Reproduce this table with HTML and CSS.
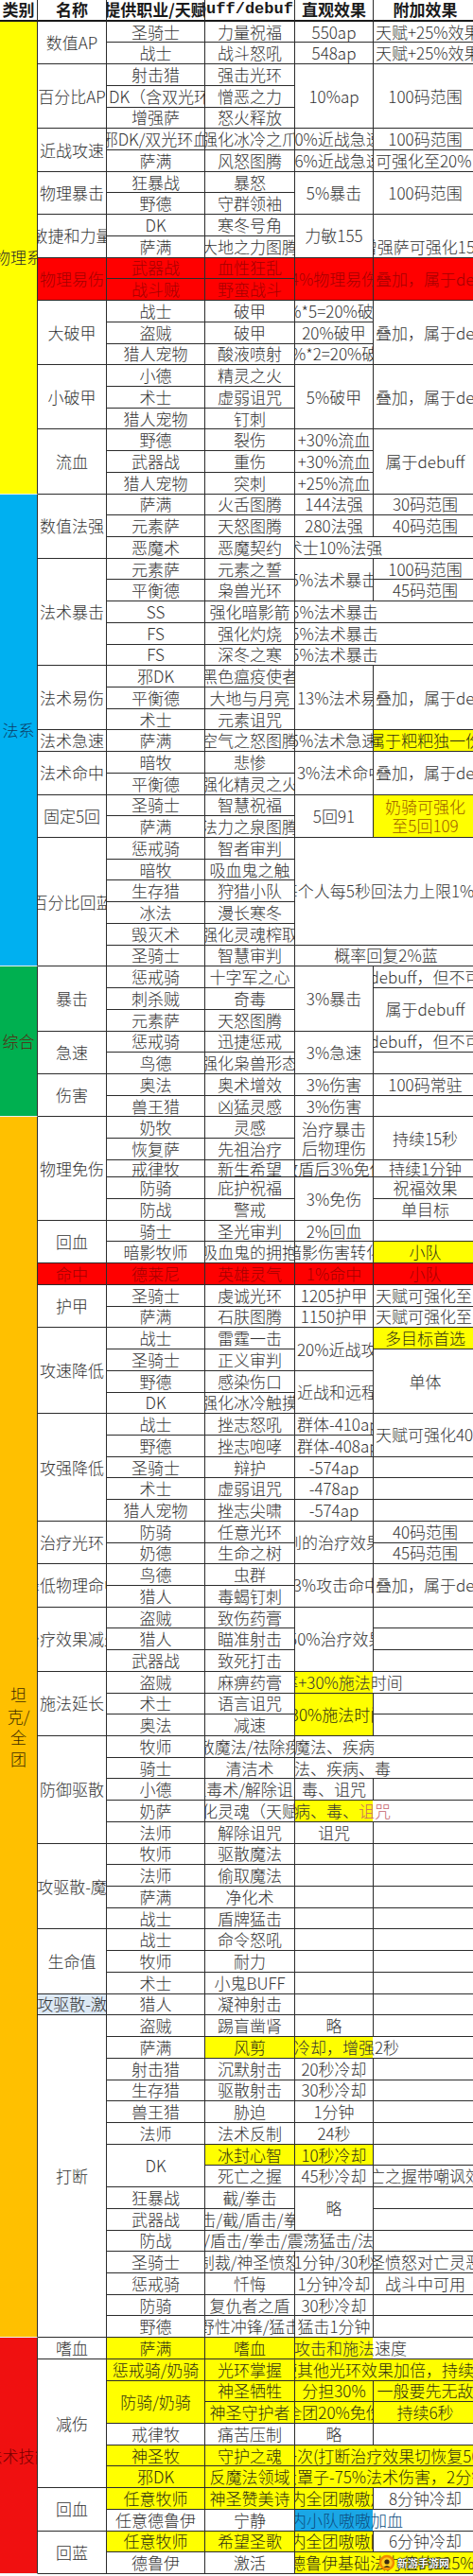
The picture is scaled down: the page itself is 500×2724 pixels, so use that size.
FILE: index.html
```html
<!DOCTYPE html>
<html lang="zh-CN">
<head>
<meta charset="utf-8">
<title>团队buff/debuff一览</title>
<link rel="stylesheet" href="styles.css">
</head>
<body>
<div class="wrap">
<div class="sheet">
<div class="h">类别</div><div class="h">名称</div><div class="h">提供职业/天赋</div><div class="h mono">buff/debuff</div><div class="h">直观效果</div><div class="h">附加效果</div>

<div class="cat k-y r22">物理系</div>
<div class="r2">数值AP</div><div>圣骑士</div><div>力量祝福</div><div>550ap</div><div class="l">天赋+25%效果</div>
<div>战士</div><div>战斗怒吼</div><div>548ap</div><div class="l">天赋+25%效果</div>
<div class="r3">百分比AP</div><div>射击猎</div><div>强击光环</div><div class="r3">10%ap</div><div class="r3">100码范围</div>
<div class="l">DK（含双光环）</div><div>憎恶之力</div>
<div>增强萨</div><div>怒火释放</div>
<div class="r2">近战攻速</div><div>邪DK/双光环血</div><div>强化冰冷之爪</div><div>20%近战急速</div><div>100码范围</div>
<div>萨满</div><div>风怒图腾</div><div>16%近战急速</div><div class="l">可强化至20%，持续</div>
<div class="r2">物理暴击</div><div>狂暴战</div><div>暴怒</div><div class="r2">5%暴击</div><div class="r2">100码范围</div>
<div>野德</div><div>守群领袖</div>
<div class="r2">敏捷和力量</div><div>DK</div><div>寒冬号角</div><div class="r2">力敏155</div><div class="r2 bt">增强萨可强化15%</div>
<div>萨满</div><div>大地之力图腾</div>
<div class="r2 rd">物理易伤</div><div class="rd">武器战</div><div class="rd">血性狂乱</div><div class="r2 rd">4%物理易伤</div><div class="r2 rd l">叠加，属于debuff</div>
<div class="rd">战斗贼</div><div class="rd">野蛮战斗</div>
<div class="r3">大破甲</div><div>战士</div><div>破甲</div><div>4%*5=20%破甲</div><div class="r3 l">叠加，属于debuff</div>
<div>盗贼</div><div>破甲</div><div>20%破甲</div>
<div>猎人宠物</div><div>酸液喷射</div><div>10%*2=20%破甲</div>
<div class="r3">小破甲</div><div>小德</div><div>精灵之火</div><div class="r3">5%破甲</div><div class="r3 l">叠加，属于debuff</div>
<div>术士</div><div>虚弱诅咒</div>
<div>猎人宠物</div><div>钉刺</div>
<div class="r3">流血</div><div>野德</div><div>裂伤</div><div>+30%流血</div><div class="r3">属于debuff</div>
<div>武器战</div><div>重伤</div><div>+30%流血</div>
<div>猎人宠物</div><div>突刺</div><div>+25%流血</div>

<div class="cat k-b r22">法系</div>
<div class="r3">数值法强</div><div>萨满</div><div>火舌图腾</div><div>144法强</div><div>30码范围</div>
<div>元素萨</div><div>天怒图腾</div><div>280法强</div><div>40码范围</div>
<div>恶魔术</div><div>恶魔契约</div><div class="c2 sp"><i>术士10%法强</i></div>
<div class="r5">法术暴击</div><div>元素萨</div><div>元素之誓</div><div class="r2">5%法术暴击</div><div>100码范围</div>
<div>平衡德</div><div>枭兽光环</div><div>45码范围</div>
<div>SS</div><div>强化暗影箭</div><div class="c2 sp"><i>5%法术暴击</i></div>
<div>FS</div><div>强化灼烧</div><div class="c2 sp"><i>5%法术暴击</i></div>
<div>FS</div><div>深冬之寒</div><div class="c2 sp"><i>5%法术暴击</i></div>
<div class="r3">法术易伤</div><div>邪DK</div><div>黑色瘟疫使者</div><div class="r3 l">13%法术易伤</div><div class="r3 l">叠加，属于debuff</div>
<div>平衡德</div><div>大地与月亮</div>
<div>术士</div><div>元素诅咒</div>
<div>法术急速</div><div>萨满</div><div>空气之怒图腾</div><div>5%法术急速</div><div class="y">属于粑粑独一份</div>
<div class="r2">法术命中</div><div>暗牧</div><div>悲惨</div><div class="r2 l">3%法术命中</div><div class="r2 l">叠加，属于debuff</div>
<div>平衡德</div><div>强化精灵之火</div>
<div class="r2">固定5回</div><div>圣骑士</div><div>智慧祝福</div><div class="r2">5回91</div><div class="r2 y ml nq">奶骑可强化<br>至5回109</div>
<div>萨满</div><div>法力之泉图腾</div>
<div class="r6">百分比回蓝</div><div>惩戒骑</div><div>智者审判</div><div class="r5 c2">每个人每5秒回法力上限1%，</div>
<div>暗牧</div><div>吸血鬼之触</div>
<div>生存猎</div><div>狩猎小队</div>
<div>冰法</div><div>漫长寒冬</div>
<div>毁灭术</div><div>强化灵魂榨取</div>
<div>圣骑士</div><div>智慧审判</div><div class="c2">概率回复2%蓝</div>

<div class="cat k-g r7">综合</div>
<div class="r3">暴击</div><div>惩戒骑</div><div>十字军之心</div><div class="r3">3%暴击</div><div>属于debuff，但不可叠加</div>
<div>刺杀贼</div><div>奇毒</div><div class="r2">属于debuff</div>
<div>元素萨</div><div>天怒图腾</div>
<div class="r2">急速</div><div>惩戒骑</div><div>迅捷惩戒</div><div class="r2">3%急速</div><div>属于debuff，但不可叠加</div>
<div>鸟德</div><div>强化枭兽形态</div><div></div>
<div class="r2">伤害</div><div>奥法</div><div>奥术增效</div><div>3%伤害</div><div>100码常驻</div>
<div>兽王猎</div><div>凶猛灵感</div><div>3%伤害</div><div></div>

<div class="cat k-o r57 vt">坦<br>克/<br>全<br>团</div>
<div class="r5">物理免伤</div><div>奶牧</div><div>灵感</div><div class="r2 nq">治疗暴击<br>后物理伤</div><div class="r2">持续15秒</div>
<div>恢复萨</div><div>先祖治疗</div>
<div>戒律牧</div><div>新生希望</div><div>放盾后3%免伤</div><div>持续1分钟</div>
<div>防骑</div><div>庇护祝福</div><div class="r2">3%免伤</div><div>祝福效果</div>
<div>防战</div><div>警戒</div><div>单目标</div>
<div class="r2">回血</div><div>骑士</div><div>圣光审判</div><div>2%回血</div><div></div>
<div>暗影牧师</div><div>吸血鬼的拥抱</div><div>暗影伤害转化</div><div class="y">小队</div>
<div class="rd">命中</div><div class="rd">德莱尼</div><div class="rd">英雄灵气</div><div class="rd">1%命中</div><div class="rd">小队</div>
<div class="r2">护甲</div><div>圣骑士</div><div>虔诚光环</div><div>1205护甲</div><div class="l">天赋可强化至1500</div>
<div>萨满</div><div>石肤图腾</div><div>1150护甲</div><div class="l">天赋可强化至1400</div>
<div class="r4">攻速降低</div><div>战士</div><div>雷霆一击</div><div class="r2 l">20%近战攻速</div><div class="y">多目标首选</div>
<div>圣骑士</div><div>正义审判</div><div class="r3">单体</div>
<div>野德</div><div>感染伤口</div><div class="r2 l">近战和远程</div>
<div>DK</div><div>强化冰冷触摸</div>
<div class="r5">攻强降低</div><div>战士</div><div>挫志怒吼</div><div class="l">群体-410ap</div><div class="r2 l">天赋可强化40%</div>
<div>野德</div><div>挫志咆哮</div><div class="l">群体-408ap</div>
<div>圣骑士</div><div>辩护</div><div>-574ap</div><div></div>
<div>术士</div><div>虚弱诅咒</div><div>-478ap</div><div></div>
<div>猎人宠物</div><div>挫志尖啸</div><div>-574ap</div><div></div>
<div class="r2">治疗光环</div><div>防骑</div><div>任意光环</div><div class="r2">到的治疗效果</div><div>40码范围</div>
<div>奶德</div><div>生命之树</div><div>45码范围</div>
<div class="r2">降低物理命中</div><div>鸟德</div><div>虫群</div><div class="r2">-3%攻击命中</div><div class="r2 l">叠加，属于debuff</div>
<div>猎人</div><div>毒蝎钉刺</div>
<div class="r3">治疗效果减少</div><div>盗贼</div><div>致伤药膏</div><div class="r3">-50%治疗效果</div><div></div>
<div>猎人</div><div>瞄准射击</div><div></div>
<div>武器战</div><div>致死打击</div><div></div>
<div class="r3">施法延长</div><div>盗贼</div><div>麻痹药膏</div><div class="c2 sp yh"><i>几率+30%施法时间</i></div>
<div>术士</div><div>语言诅咒</div><div class="r2 y">+30%施法时间</div><div></div>
<div>奥法</div><div>减速</div><div></div>
<div class="r5">防御驱散</div><div>牧师</div><div>驱散魔法/祛除疾病</div><div class="c2 sp"><i>魔法、疾病</i></div>
<div>骑士</div><div>清洁术</div><div class="c2 sp"><i>魔法、疾病、毒</i></div>
<div>小德</div><div>驱毒术/解除诅咒</div><div>毒、诅咒</div><div></div>
<div>奶萨</div><div>净化灵魂（天赋）</div><div class="c2 sp yh"><i>疾病、毒、<b>诅咒</b></i></div>
<div>法师</div><div>解除诅咒</div><div>诅咒</div><div></div>
<div class="r4">进攻驱散-魔法</div><div>牧师</div><div>驱散魔法</div><div></div><div></div>
<div>法师</div><div>偷取魔法</div><div></div><div></div>
<div>萨满</div><div>净化术</div><div></div><div></div>
<div>战士</div><div>盾牌猛击</div><div></div><div></div>
<div class="r3">生命值</div><div>战士</div><div>命令怒吼</div><div></div><div></div>
<div>牧师</div><div>耐力</div><div></div><div></div>
<div>术士</div><div>小鬼BUFF</div><div></div><div></div>
<div class="pb">进攻驱散-激怒</div><div>猎人</div><div>凝神射击</div><div></div><div></div>
<div class="r15">打断</div><div>盗贼</div><div>踢盲凿肾</div><div>略</div><div></div>
<div>萨满</div><div class="y">风剪</div><div class="c2 sp yh"><i>6秒冷却，增强2秒</i></div>
<div>射击猎</div><div>沉默射击</div><div>20秒冷却</div><div></div>
<div>生存猎</div><div>驱散射击</div><div>30秒冷却</div><div></div>
<div>兽王猎</div><div>胁迫</div><div>1分钟</div><div></div>
<div>法师</div><div>法术反制</div><div>24秒</div><div></div>
<div class="r2">DK</div><div class="y">冰封心智</div><div class="y">10秒冷却</div><div></div>
<div>死亡之握</div><div>45秒冷却</div><div>死亡之握带嘲讽效果</div>
<div>狂暴战</div><div>截/拳击</div><div class="r2">略</div><div></div>
<div>武器战</div><div>拳击/截/盾击/拳击</div><div></div>
<div>防战</div><div class="c2 sp4"><i>拳击/截/盾牌猛击/盾击/拳击/震荡猛击/法术反射</i></div><div></div>
<div>圣骑士</div><div>制裁/神圣愤怒</div><div>1分钟/30秒</div><div>神圣愤怒对亡灵恶魔</div>
<div>惩戒骑</div><div>忏悔</div><div>1分钟冷却</div><div>战斗中可用</div>
<div>防骑</div><div>复仇者之盾</div><div>30秒冷却</div><div></div>
<div>野德</div><div>野性冲锋/猛击</div><div>猛击1分钟</div><div></div>

<div class="cat k-r r11">法术技能</div>
<div>嗜血</div><div class="y">萨满</div><div class="y">嗜血</div><div class="c2 sp yh"><i>提高攻击和施法速度</i></div>
<div class="r6">减伤</div><div class="y">惩戒骑/奶骑</div><div class="y">光环掌握</div><div class="c2 y l ni"><i>使其他光环效果加倍，持续6秒</i></div>
<div class="r2 y">防骑/奶骑</div><div class="y">神圣牺牲</div><div class="y">分担30%</div><div class="y">一般要先无敌</div>
<div class="y">神圣守护者</div><div class="y">全团20%免伤</div><div class="y">持续6秒</div>
<div>戒律牧</div><div>痛苦压制</div><div>略</div><div></div>
<div class="y">神圣牧</div><div class="y">守护之魂</div><div class="c2 y l ni"><i>一次(打断治疗效果切恢复50%)</i></div>
<div class="y">邪DK</div><div class="y">反魔法领域</div><div class="c2 y l ni"><i>大罩子-75%法术伤害，2分钟</i></div>
<div class="r2">回血</div><div class="y">任意牧师</div><div class="y">神圣赞美诗</div><div class="y">8秒内全团嗷嗷加血</div><div>8分钟冷却</div>
<div>任意德鲁伊</div><div>宁静</div><div class="c2 sp bh"><i>8秒内小队嗷嗷加血</i></div>
<div class="r2">回蓝</div><div class="y">任意牧师</div><div class="y">希望圣歌</div><div class="y">8秒内全团嗷嗷回蓝</div><div>6分钟冷却</div>
<div>德鲁伊</div><div>激活</div><div class="c2 y l ns"><i>德鲁伊基础法力值的225%</i></div>
</div>
<div class="wm"><svg width="18" height="18" viewBox="0 0 18 18"><circle cx="9" cy="9" r="7" fill="#ffd21a" stroke="#f08a00" stroke-width="2.5"/><circle cx="9" cy="8" r="2.6" fill="#3a2a10"/><path d="M5.5 14 Q9 10.5 12.5 14" fill="#3a2a10"/></svg><span>新游手游网</span></div>
</div>
</body>
</html>
```

FILE: styles.css
```css
* { box-sizing: border-box; margin: 0; padding: 0; }
html, body { background: #fff; }
body {
  margin: 0;
  font-family: "Noto Sans CJK SC", "Liberation Sans", sans-serif;
  font-weight: 300;
  color: #333;
}
.wrap {
  position: relative;
  width: 500px;
  height: 2724px;
  overflow: hidden;
}
.sheet {
  display: grid;
  width: 505px;
  grid-template-columns: 40px 73px 104px 95px 83px 110px;
  grid-template-rows: repeat(54, 22.72px) 18.5px repeat(65, 22.72px);
}
.sheet > div {
  display: flex;
  align-items: center;
  justify-content: center;
  overflow: hidden;
  white-space: nowrap;
  text-align: center;
  border-right: 1px solid #2c2c2c;
  border-bottom: 1px solid #2c2c2c;
  font-size: 17px;
  line-height: 20px;
  min-width: 0;
  min-height: 0;
}
.sheet > .h {
  font-weight: 700;
  color: #1a1a1a;
  border-bottom: 2px solid #1a1a1a;
}
.sheet > .mono { font-family: "Liberation Mono", "Noto Sans CJK SC", monospace; font-size: 17px; }

.r2 { grid-row: span 2; }
.r3 { grid-row: span 3; }
.r4 { grid-row: span 4; }
.r5 { grid-row: span 5; }
.r6 { grid-row: span 6; }
.r7 { grid-row: span 7; }
.r11 { grid-row: span 11; }
.r15 { grid-row: span 15; }
.r22 { grid-row: span 22; }
.r57 { grid-row: span 57; }
.c2 { grid-column: span 2; }

.sheet > .l { justify-content: flex-start; padding-left: 2px; }
.sheet > .bt { align-items: flex-end; padding-bottom: 1px; }
.y { background: #ffff00; color: #2e2e14; }
.ml { color: #9c5a00; }
.nq { line-height: 22px; }
.rd { background: #ff0000; color: #a30000; }
.pb { background: #dde9f5; }

.sheet > .sp, .sheet > .sp4 { justify-content: flex-start; padding-left: 0; }
.sp > i, .sp4 > i {
  flex: none;
  display: flex;
  justify-content: center;
  font-style: normal;
}
.sp > i { width: 83px; }
.sp4 > i { width: 95px; }
.sp b { font-weight: 300; color: #c5626e; }
.yh { background: linear-gradient(90deg, #ffff00 82px, #fff 82px); }
.bh { background: linear-gradient(90deg, #1aa7e6 82px, #fff 82px); color: #0d4d80; }
.ni > i, .ns > i { font-style: normal; flex: none; }
.sheet > .ni { padding-left: 0; }
.ni > i { margin-left: -15px; }
.sheet > .ns { padding-left: 0; }
.ns > i { margin-left: -6px; }

.sheet > .cat { border-bottom-color: #efefef; }
.k-y { background: #ffff00; color: #2a2a2a; }
.k-b { background: #00b0f0; color: #0c3c66; }
.k-g { background: #00b050; color: #5a2410; }
.k-o { background: #ffc000; color: #3d2a00; }
.k-r { background: #f01010; color: #7a0000; }
.sheet > .vt { line-height: 22.7px; }

.wm {
  position: absolute;
  left: 400px;
  top: 2701px;
  display: flex;
  align-items: center;
  gap: 2px;
  font-family: "Noto Sans CJK SC", sans-serif;
  font-weight: 700;
  font-size: 11px;
  line-height: 14px;
  color: #fff;
  text-shadow: 0 0 2px #000, 0 0 1px #000, 0 0 1px #000;
}
.wm svg { display: block; }
```
